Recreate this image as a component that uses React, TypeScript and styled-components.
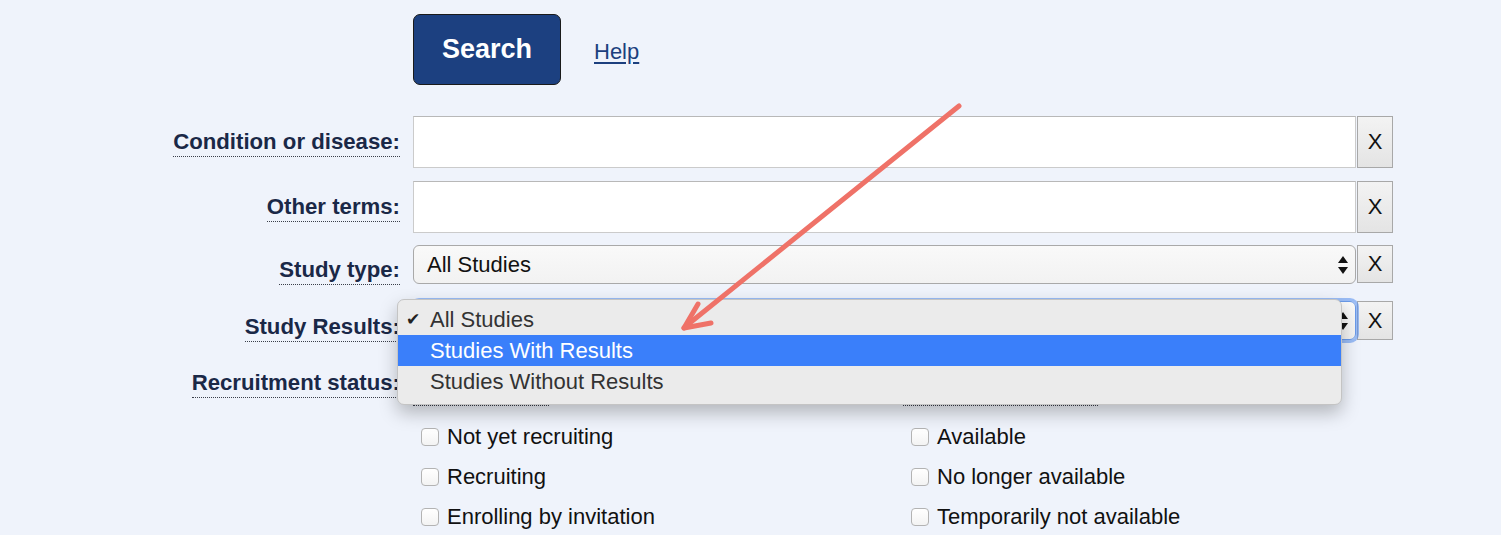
import styled, { createGlobalStyle } from "styled-components";

const GlobalStyle = createGlobalStyle`
    html, body {
        margin: 0;
        padding: 0;
        background: #eff3fb;
    }
    body {
        font-family: "Liberation Sans", Arial, sans-serif;
    }
`;

const Page = styled.div`
    position: relative;
    width: 1501px;
    height: 535px;
    overflow: hidden;
    padding-top: 14px;
    box-sizing: border-box;
    background: #eff3fb;
`;

const Actions = styled.div`
    display: flex;
    align-items: center;
    gap: 33px;
    margin-left: 413px;
`;

const SearchButton = styled.button`
    width: 148px;
    height: 71px;
    border: 1.5px solid #1a1a1a;
    border-radius: 7px;
    background: #1c4080;
    color: white;
    font-family: "Liberation Sans", Arial, sans-serif;
    font-weight: bold;
    font-size: 27px;
    cursor: pointer;
`;

const HelpLink = styled.a`
    font-size: 22px;
    color: #1c3f7e;
    text-decoration: underline;
    text-underline-offset: 3px;
    margin-top: 4px;
`;

const Row = styled.div<{ $top: number }>`
    display: flex;
    align-items: flex-start;
    margin-top: ${({ $top }) => $top}px;
`;

const LabelCell = styled.div<{ $pad: number }>`
    width: 400px;
    flex: none;
    text-align: right;
    padding-top: ${({ $pad }) => $pad}px;
    box-sizing: border-box;
`;

const Label = styled.span`
    display: inline-block;
    font-size: 22.2px;
    font-weight: bold;
    color: #1a2847;
    line-height: 25px;
    border-bottom: 1.5px dotted #3a3f4a;
    padding-bottom: 2px;
`;

const Field = styled.div`
    position: relative;
    margin-left: 13px;
    width: 943px;
    flex: none;
`;

const TextInput = styled.input`
    display: block;
    width: 943px;
    height: 52px;
    box-sizing: border-box;
    border: 1px solid #cbcbcb;
    border-top-color: #b8b8b8;
    background: white;
    font-size: 22px;
    padding: 0 10px;
`;

const SelectBox = styled.div<{ $focus?: boolean }>`
    display: flex;
    align-items: center;
    justify-content: space-between;
    height: 39px;
    box-sizing: border-box;
    padding: 0 6px 0 13px;
    border: 1px solid ${({ $focus }) => ($focus ? "#6a9ae8" : "#a9a9a9")};
    border-radius: 6px;
    background: linear-gradient(#f9f9f9, #f2f2f2);
    font-size: 22px;
    color: #111;
    box-shadow: ${({ $focus }) =>
        $focus ? "0 0 0 3px rgba(84, 142, 240, 0.55)" : "none"};
`;

const ClearButton = styled.button<{ $h: number }>`
    width: 36px;
    height: ${({ $h }) => $h}px;
    margin-left: 1px;
    flex: none;
    box-sizing: border-box;
    border: 1px solid #a8a8a8;
    background: linear-gradient(#f3f3f3, #e4e4e4);
    font-family: "Liberation Sans", Arial, sans-serif;
    font-size: 22px;
    color: #111;
    padding: 0;
`;

const Menu = styled.div`
    position: absolute;
    left: -16px;
    top: -2px;
    width: 945px;
    box-sizing: border-box;
    padding: 4px 0 7px;
    background: #ebebeb;
    border: 1px solid #c4c4c4;
    border-radius: 7px;
    box-shadow: 0 8px 18px rgba(0, 0, 0, 0.25);
    z-index: 2;
`;

const MenuItem = styled.div<{ $active?: boolean }>`
    position: relative;
    height: 31px;
    line-height: 31px;
    padding-left: 32px;
    font-size: 22px;
    color: ${({ $active }) => ($active ? "white" : "#333")};
    background: ${({ $active }) => ($active ? "#3a7ffa" : "transparent")};
`;

const Check = styled.span`
    position: absolute;
    left: 8px;
    top: 0;
    font-family: "DejaVu Sans", sans-serif;
    font-size: 17px;
    color: #222;
`;

const StatusGrid = styled.div`
    margin-left: 13px;
    display: grid;
    grid-template-columns: 490px 490px;
`;

const SubHeading = styled.span`
    display: inline-block;
    font-size: 22px;
    font-weight: bold;
    color: #1a2847;
    line-height: 25px;
    margin-top: 8px;
    border-bottom: 1.5px dotted #3a3f4a;
    padding-bottom: 2px;
`;

const CheckList = styled.div`
    margin-top: 11px;
    padding-left: 8px;
`;

const CheckRow = styled.label`
    display: flex;
    align-items: center;
    gap: 8px;
    height: 40px;
    font-size: 22px;
    color: #111;
`;

const Box = styled.span`
    width: 16px;
    height: 16px;
    border: 1px solid #b3b3b3;
    border-radius: 4px;
    background: linear-gradient(#ffffff, #f3f3f3);
    flex: none;
`;

const Annotation = styled.svg`
    position: absolute;
    left: 0;
    top: 0;
    z-index: 3;
    pointer-events: none;
`;

function Stepper() {
    return (
        <svg width="12" height="22" viewBox="0 0 12 22">
            <path d="M6 2 L11 9 L1 9 Z" fill="#111" />
            <path d="M6 20 L11 13 L1 13 Z" fill="#111" />
        </svg>
    );
}

const recruiting = ["Not yet recruiting", "Recruiting", "Enrolling by invitation"];
const expanded = ["Available", "No longer available", "Temporarily not available"];

export default function App() {
    return (
        <Page>
            <GlobalStyle />
            <Actions>
                <SearchButton>Search</SearchButton>
                <HelpLink href="#">Help</HelpLink>
            </Actions>

            <Row $top={31}>
                <LabelCell $pad={13}>
                    <Label>Condition or disease:</Label>
                </LabelCell>
                <Field>
                    <TextInput />
                </Field>
                <ClearButton $h={52}>X</ClearButton>
            </Row>

            <Row $top={13}>
                <LabelCell $pad={13}>
                    <Label>Other terms:</Label>
                </LabelCell>
                <Field>
                    <TextInput />
                </Field>
                <ClearButton $h={52}>X</ClearButton>
            </Row>

            <Row $top={12}>
                <LabelCell $pad={12}>
                    <Label>Study type:</Label>
                </LabelCell>
                <Field>
                    <SelectBox>
                        <span>All Studies</span>
                        <Stepper />
                    </SelectBox>
                </Field>
                <ClearButton $h={38}>X</ClearButton>
            </Row>

            <Row $top={16}>
                <LabelCell $pad={13}>
                    <Label>Study Results:</Label>
                </LabelCell>
                <Field>
                    <SelectBox $focus>
                        <span>All Studies</span>
                        <Stepper />
                    </SelectBox>
                    <Menu>
                        <MenuItem>
                            <Check>✔</Check>
                            All Studies
                        </MenuItem>
                        <MenuItem $active>Studies With Results</MenuItem>
                        <MenuItem>Studies Without Results</MenuItem>
                    </Menu>
                </Field>
                <ClearButton $h={39}>X</ClearButton>
            </Row>

            <Row $top={28}>
                <LabelCell $pad={0}>
                    <Label>Recruitment status:</Label>
                </LabelCell>
                <StatusGrid>
                    <div>
                        <SubHeading>Recruitment:</SubHeading>
                        <CheckList>
                            {recruiting.map((r) => (
                                <CheckRow key={r}>
                                    <Box />
                                    {r}
                                </CheckRow>
                            ))}
                        </CheckList>
                    </div>
                    <div>
                        <SubHeading>Expanded Access:</SubHeading>
                        <CheckList>
                            {expanded.map((r) => (
                                <CheckRow key={r}>
                                    <Box />
                                    {r}
                                </CheckRow>
                            ))}
                        </CheckList>
                    </div>
                </StatusGrid>
            </Row>

            <Annotation width="1501" height="535" viewBox="0 0 1501 535">
                <g stroke="#ef7268" strokeWidth="5" strokeLinecap="round" fill="none">
                    <line x1="959" y1="106" x2="686" y2="326" />
                    <line x1="684" y1="328" x2="698" y2="304" />
                    <line x1="684" y1="328" x2="711" y2="323" />
                </g>
            </Annotation>
        </Page>
    );
}
